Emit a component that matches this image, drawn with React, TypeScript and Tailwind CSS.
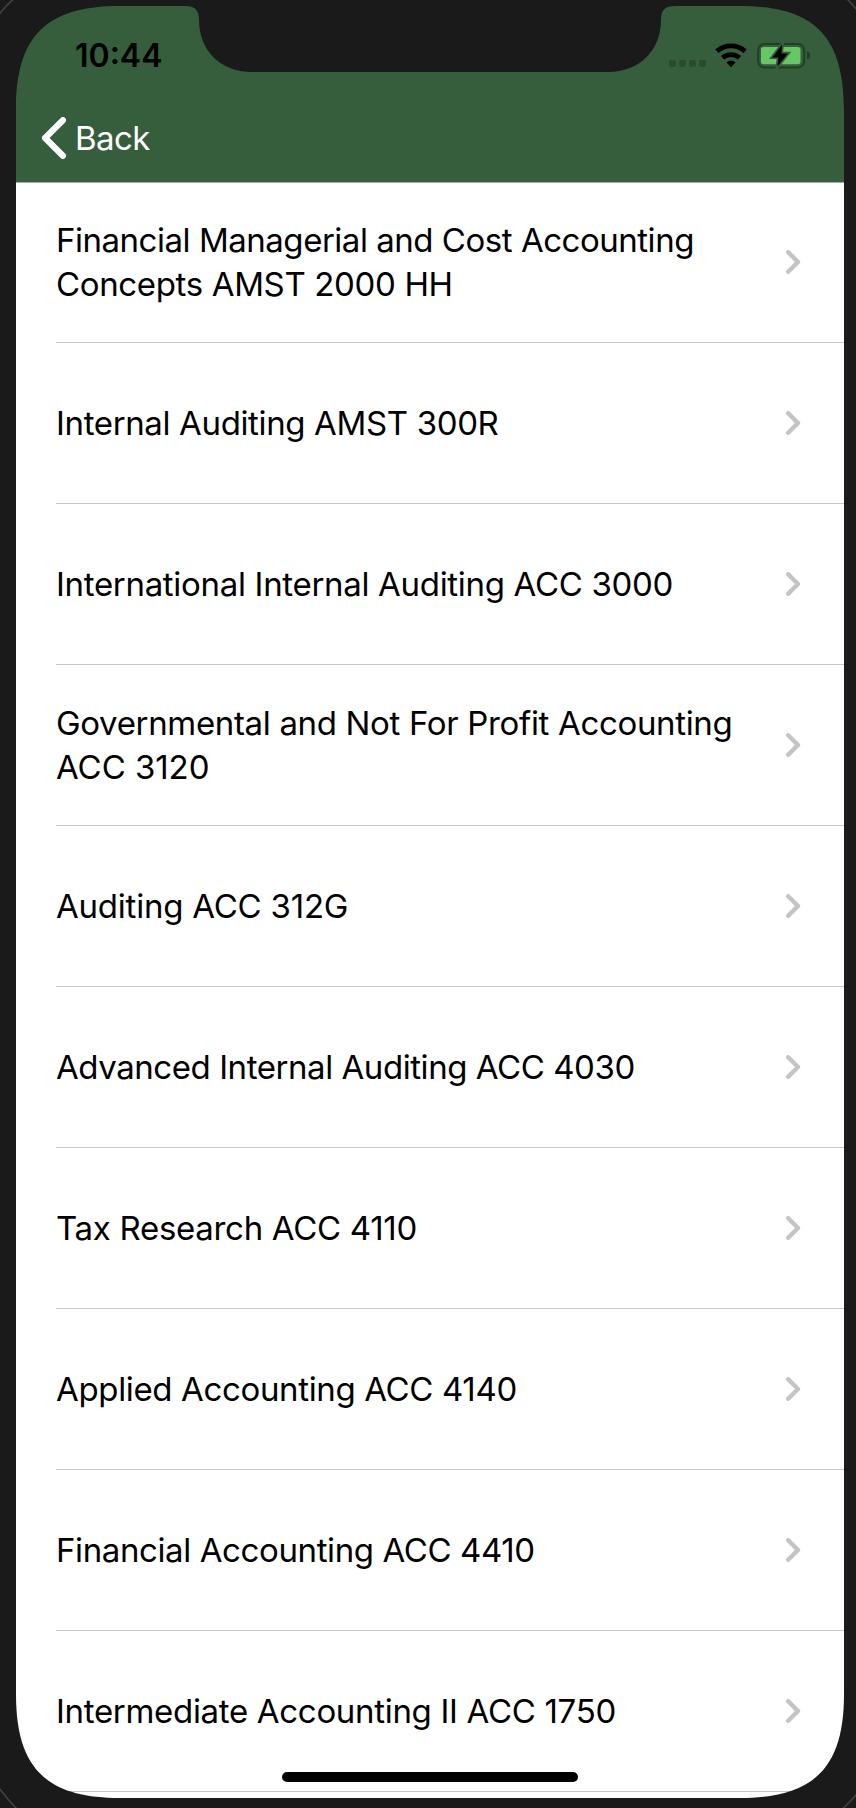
type Course = { lines: { text: string; tracking: string }[] };

const courses: Course[] = [
  {
    lines: [
      { text: "Financial Managerial and Cost Accounting", tracking: "tracking-[-0.475px]" },
      { text: "Concepts AMST 2000 HH", tracking: "tracking-[-0.35px]" },
    ],
  },
  { lines: [{ text: "Internal Auditing AMST 300R", tracking: "tracking-[-0.36px]" }] },
  { lines: [{ text: "International Internal Auditing ACC 3000", tracking: "tracking-[-0.31px]" }] },
  {
    lines: [
      { text: "Governmental and Not For Profit Accounting", tracking: "tracking-[-0.335px]" },
      { text: "ACC 3120", tracking: "tracking-[-0.06px]" },
    ],
  },
  { lines: [{ text: "Auditing ACC 312G", tracking: "tracking-[-0.22px]" }] },
  { lines: [{ text: "Advanced Internal Auditing ACC 4030", tracking: "tracking-[-0.44px]" }] },
  { lines: [{ text: "Tax Research ACC 4110", tracking: "tracking-[-0.3px]" }] },
  { lines: [{ text: "Applied Accounting ACC 4140", tracking: "tracking-[-0.35px]" }] },
  { lines: [{ text: "Financial Accounting ACC 4410", tracking: "tracking-[-0.39px]" }] },
  { lines: [{ text: "Intermediate Accounting II ACC 1750", tracking: "tracking-[-0.31px]" }] },
];

function SignalDots() {
  return (
    <div className="flex gap-[3px] pb-px">
      {[0, 1, 2, 3].map((i) => (
        <span key={i} className="size-[7px] rounded-[2px] bg-[#2b4b30]" />
      ))}
    </div>
  );
}

function WifiIcon() {
  return (
    <svg className="h-[25px] w-8" viewBox="0 0 32 25" fill="none" stroke="black" strokeWidth="4.8">
      <path d="M1.9 8.3A21.2 21.2 0 0 1 30.1 8.3" />
      <path d="M7.5 14.8A12.9 12.9 0 0 1 24.5 14.8" />
      <path d="M16 24.2 11.5 19.4A6.4 6.4 0 0 1 20.5 19.4Z" fill="black" stroke="none" />
    </svg>
  );
}

function BatteryIcon() {
  const bolt = "M26.2 1.6 16.4 14.4H22.4L21.4 23.6 31.8 10.4H25.4Z";
  return (
    <svg className="h-[26px] w-[54px]" viewBox="0 0 54 26" fill="none">
      <rect x="2.2" y="1" width="46" height="23.4" rx="6.2" stroke="#233d27" strokeWidth="2" />
      <path d="M51 8c4 1.2 4 7.4 0 8.8Z" fill="#233d27" />
      <rect x="5" y="4" width="39.5" height="17.2" rx="2.6" fill="#67c766" />
      <path d={bolt} fill="#365e3c" stroke="#365e3c" strokeWidth="3.4" />
      <path d={bolt} fill="black" />
    </svg>
  );
}

function CourseRow({ lines }: Course) {
  return (
    <li className="ml-10 flex h-[161px] shrink-0 items-center border-b border-[#c6c6c8] pr-[43px]">
      <div className="flex-1 text-[33px] leading-[44px] whitespace-nowrap text-black">
        {lines.map((line) => (
          <p key={line.text} className={line.tracking}>
            {line.text}
          </p>
        ))}
      </div>
      <svg className="h-6 w-4" viewBox="0 0 16 24" fill="none" stroke="#c4c4c6" strokeWidth="4.4" strokeLinecap="round" strokeLinejoin="round">
        <path d="M3.2 2.2 13 12 3.2 21.8" />
      </svg>
    </li>
  );
}

function DeviceBezel() {
  return (
    <svg className="pointer-events-none absolute inset-0 h-[1808px] w-[856px]" viewBox="0 0 856 1808" fill="none">
      <path
        fillRule="evenodd"
        fill="#1a1a1a"
        d="M0 0H856V1808H0Z M16 110C16 36 46 6 120 6H185C195 6 199 10 199 20C199 50 220 72 252 72H608C640 72 661 50 661 20C661 10 665 6 675 6H740C814 6 844 36 844 110V1694C844 1768 814 1798 740 1798H120C46 1798 16 1768 16 1694Z"
      />
      <g stroke="#444545" strokeWidth="1.5">
        <path d="M-1 14.5Q5 6.5 13.5-1" />
        <path d="M847-1Q852 4 857 10" />
        <path d="M-1 1788Q7 1799 17 1809" />
        <path d="M842.5 1809Q850 1802 857 1794" />
      </g>
    </svg>
  );
}

export default function App() {
  return (
    <div className="relative h-[1808px] w-[856px] overflow-hidden bg-[#1a1a1a] px-3 pt-1.5 font-['Inter','Liberation_Sans',sans-serif]">
      <main className="ml-1 flex h-[1792px] w-[828px] flex-col overflow-hidden bg-white">
        <header className="flex h-[177px] shrink-0 flex-col border-b border-[#a9aaa9] bg-[#365e3c]">
          <div className="flex h-[88px] items-start justify-between pr-[34px] pl-[59px]">
            <time className="pt-[30px] text-[32px] leading-10 font-semibold text-black">10:44</time>
            <div className="flex items-end pt-[37px]">
              <div className="flex items-end gap-[9px] pb-px">
                <SignalDots />
                <WifiIcon />
              </div>
              <div className="ml-[9px]">
                <BatteryIcon />
              </div>
            </div>
          </div>
          <button className="flex h-[88px] items-center pl-[25px] text-white">
            <svg className="h-[42px] w-[26px]" viewBox="0 0 26 42" fill="none" stroke="currentColor" strokeWidth="6.2" strokeLinecap="round" strokeLinejoin="round">
              <path d="M21.9 3.2 4.1 21 21.9 38.8" />
            </svg>
            <span className="ml-2 text-[33px] leading-[44px] tracking-[-0.6px]">Back</span>
          </button>
        </header>
        <ul className="-mt-px flex flex-col">
          {courses.map((course) => (
            <CourseRow key={course.lines[0].text} lines={course.lines} />
          ))}
        </ul>
      </main>
      <DeviceBezel />
      <div className="absolute top-[1772px] left-[282px] h-2.5 w-[296px] rounded-full bg-black" />
    </div>
  );
}
